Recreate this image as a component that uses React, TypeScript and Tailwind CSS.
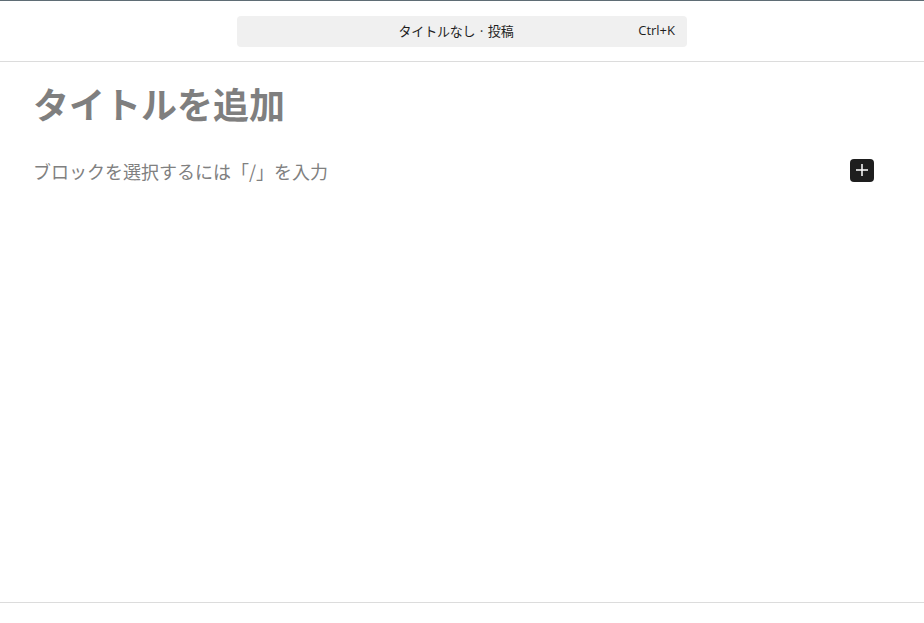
import React from 'react';

export default function App() {
  return (
    <div className="h-[623px] flex flex-col bg-white border-t border-[#5f6d75] font-['Noto_Sans_CJK_JP','Noto_Sans',sans-serif]">
      <header className="h-[61px] shrink-0 flex items-center justify-center border-b border-[#dcdcdc]">
        <div className="w-[450px] h-[31px] rounded bg-[#f0f0f0] flex items-center relative text-[13px] text-[#1e1e1e]">
          <span className="flex-1 text-center pr-[12px] tracking-[-0.2px]">タイトルなし · 投稿</span>
          <span className="absolute right-[12px] font-['Open_Sans',sans-serif]">Ctrl+K</span>
        </div>
      </header>

      <main className="flex-1 px-[33px] pt-[13px]">
        <h1 className="text-[36px] leading-[56px] font-bold text-[#7f7f7f]">タイトルを追加</h1>
        <div className="mt-[27px] flex items-center justify-between pr-[17px]">
          <p className="text-[18px] leading-[26px] text-[#808080]">ブロックを選択するには「/」を入力</p>
          <button className="w-[24px] h-[23px] mb-[2px] rounded-sm bg-[#1e1e1e] flex items-center justify-center">
            <svg width="14" height="14" viewBox="0 0 14 14">
              <path d="M7 1v12M1 7h12" stroke="#fff" strokeWidth="1.5" />
            </svg>
          </button>
        </div>
      </main>

      <footer className="h-[21px] shrink-0 border-t border-[#dcdcdc]" />
    </div>
  );
}
